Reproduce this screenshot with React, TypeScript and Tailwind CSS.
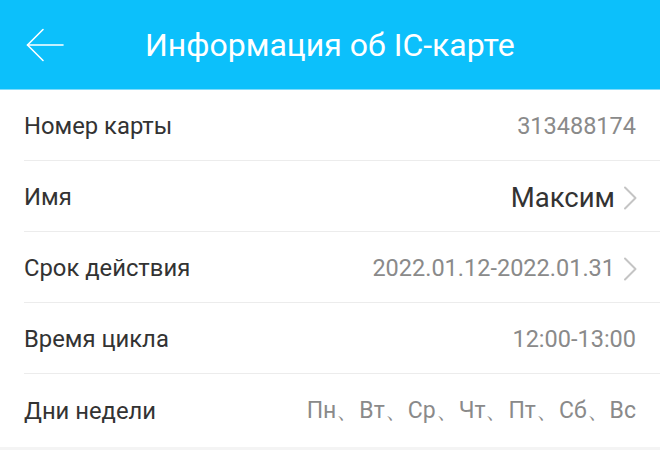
type Row = {
  label: string;
  value: string;
  strong?: boolean;
  arrow?: boolean;
};

const rows: Row[] = [
  { label: "Номер карты", value: "313488174" },
  { label: "Имя", value: "Максим", strong: true, arrow: true },
  { label: "Срок действия", value: "2022.01.12-2022.01.31", arrow: true },
  { label: "Время цикла", value: "12:00-13:00" },
  { label: "Дни недели", value: "Пн、Вт、Ср、Чт、Пт、Сб、Вс" },
];

function Chevron() {
  return (
    <svg width="14" height="26" viewBox="0 0 14 26" fill="none" stroke="#c4c4c4" strokeWidth="2" strokeLinecap="round" strokeLinejoin="round" className="ml-[8px] -mr-[1px]">
      <path d="M2 2.5l10.5 10.5L2 23.5" />
    </svg>
  );
}

export default function App() {
  return (
    <div className="w-[660px] h-[450px] overflow-hidden bg-[#f4f4f4] font-['Roboto','Noto_Sans',sans-serif]">
      <header className="h-[90px] bg-[#0cc0fb] border-b border-[#7fdcfb] flex items-center">
        <button className="w-[90px] h-full flex items-center pl-[26px]">
          <svg width="38" height="36" viewBox="0 0 38 36" fill="none" stroke="#ffffff" strokeWidth="1.6" strokeLinecap="round" strokeLinejoin="round">
            <path d="M37 18H1.5" />
            <path d="M17 2.5L1.5 18 17 33.5" />
          </svg>
        </button>
        <h1 className="ml-[55px] text-[32px] text-white">Информация об IC-карте</h1>
      </header>

      <div className="bg-white pl-[24px] pb-[2px]">
        {rows.map((r, i) => (
          <div
            key={r.label}
            className={
              "h-[71px] flex items-center pr-[24px] pt-[4px] " +
              (i < rows.length - 1 ? "border-b border-[#ececec]" : "")
            }
          >
            <span className="text-[23.8px] text-[#333333]">{r.label}</span>
            <div className="ml-auto flex items-center">
              <span
                className={
                  r.strong
                    ? "text-[27.5px] text-[#333333]"
                    : i === 4
                    ? "text-[23px] text-[#8a8a8a]"
                    : "text-[23.5px] text-[#8a8a8a]"
                }
              >
                {r.value}
              </span>
              {r.arrow && <Chevron />}
            </div>
          </div>
        ))}
      </div>
    </div>
  );
}
